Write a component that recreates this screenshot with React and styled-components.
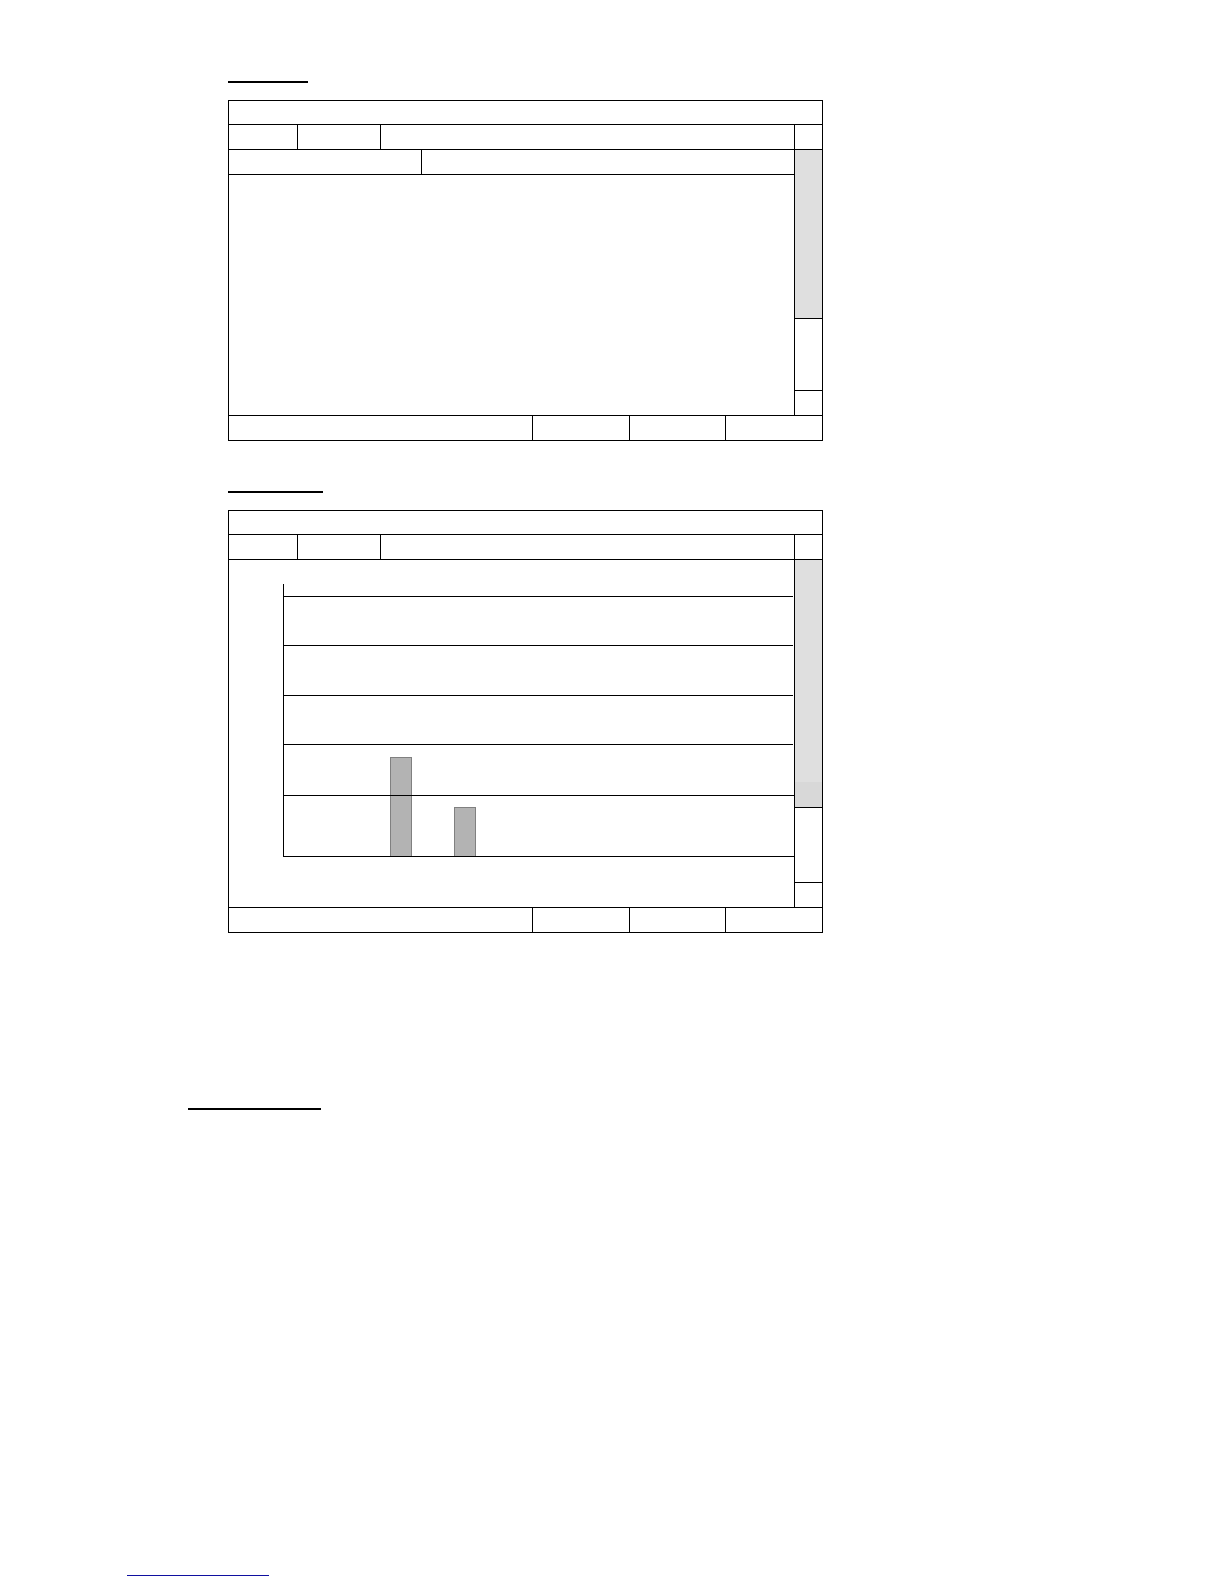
import React from "react";
import styled, { createGlobalStyle } from "styled-components";

const tabs = [69, 83];
const actions = [97, 96, 97];

const gridBands = [49, 50, 49, 51, 61];
const bars = [
  { id: "first", offset: 106, height: 99 },
  { id: "second", offset: 42, height: 49 },
];

const Tabs = () => (
  <TabRow>
    {tabs.map((width) => (
      <Tab key={width} type="button" aria-label="Tab" $width={width} />
    ))}
  </TabRow>
);

const ScrollRail = ({ thumb, shaded }) => (
  <Rail>
    <RailButton type="button" aria-label="Scroll up" />
    <Thumb $height={thumb}>{shaded && <ThumbShade />}</Thumb>
    <Track />
    <RailButton type="button" aria-label="Scroll down" $last />
  </Rail>
);

const Screen = ({ thumb, shaded, children }) => (
  <Frame>
    <TitleBar />
    <Middle>
      <Main>
        <Tabs />
        {children}
      </Main>
      <ScrollRail thumb={thumb} shaded={shaded} />
    </Middle>
    <ActionBar>
      <Status />
      {actions.map((width, i) => (
        <Action key={i} type="button" aria-label="Action" $width={width} />
      ))}
    </ActionBar>
  </Frame>
);

const BarChart = () => (
  <Chart>
    <Plot>
      <Bars>
        {bars.map((bar) => (
          <Bar key={bar.id} $offset={bar.offset} $height={bar.height} />
        ))}
      </Bars>
      <GridLines>
        {gridBands.map((height, i) => (
          <Band key={i} $height={height} />
        ))}
      </GridLines>
    </Plot>
  </Chart>
);

const App = () => {
  return (
    <>
      <GlobalStyle />
      <Page>
        <Content>
          <Heading $width={80} />
          <Screen thumb={168}>
            <FieldRow>
              <FieldLabel />
            </FieldRow>
            <ListArea />
          </Screen>

          <SecondHeading $width={95} />
          <Screen thumb={247} shaded>
            <BarChart />
          </Screen>
        </Content>

        <SectionHeading $width={133} />

        <Footer>
          <FooterLink href="#top" aria-label="Back to top" />
        </Footer>
      </Page>
    </>
  );
};

export default App;

/* ---------- Page ---------- */

const GlobalStyle = createGlobalStyle`
  * {
    box-sizing: border-box;
  }

  body {
    margin: 0;
    background: #fff;
    color: #000;
    font-family: "Liberation Sans", Arial, sans-serif;
    font-size: 16px;
  }

  button {
    margin: 0;
    padding: 0;
    border: 0;
    border-radius: 0;
    background: transparent;
    cursor: pointer;
  }
`;

const Page = styled.main`
  display: flex;
  flex-direction: column;
  min-height: 100vh;
  padding: 40px 0 8px 127px;
`;

const Content = styled.div`
  padding: 0 401px 0 101px;
`;

const Heading = styled.h2`
  width: ${({ $width }) => $width}px;
  height: 43px;
  margin: 0 0 17px;
  border-bottom: 2px solid #000;
`;

const SecondHeading = styled(Heading)`
  margin-top: 9px;
`;

const SectionHeading = styled(Heading)`
  margin: 134px 0 0 61px;
`;

const Footer = styled.footer`
  margin-top: auto;
`;

const FooterLink = styled.a`
  display: block;
  width: 142px;
  height: 20px;
  border-bottom: 1px solid #1010a0;
`;

/* ---------- Screen frame ---------- */

const Frame = styled.section`
  border: 1px solid #000;
`;

const TitleBar = styled.header`
  height: 23px;
`;

const Middle = styled.div`
  display: flex;
  border-top: 1px solid #000;
`;

const Main = styled.div`
  flex: 1;
  min-width: 0;
`;

const TabRow = styled.div`
  display: flex;
  height: 25px;
  border-bottom: 1px solid #000;
`;

const Tab = styled.button`
  && {
    width: ${({ $width }) => $width}px;
    border-right: 1px solid #000;
  }
`;

const FieldRow = styled.div`
  display: flex;
  height: 25px;
  border-bottom: 1px solid #000;
`;

const FieldLabel = styled.div`
  width: 193px;
  border-right: 1px solid #000;
`;

const ListArea = styled.div`
  height: 240px;
`;

const ActionBar = styled.footer`
  display: flex;
  height: 25px;
  border-top: 1px solid #000;
`;

const Status = styled.div`
  flex: 1;
`;

const Action = styled.button`
  && {
    width: ${({ $width }) => $width}px;
    border-left: 1px solid #000;
  }
`;

/* ---------- Scroll rail ---------- */

const Rail = styled.div`
  display: flex;
  flex-direction: column;
  width: 28px;
  border-left: 1px solid #000;
`;

const RailButton = styled.button`
  && {
    height: 25px;
    border-top: ${({ $last }) => ($last ? "1px solid #000" : "0")};
    border-bottom: ${({ $last }) => ($last ? "0" : "1px solid #000")};
  }
`;

const Thumb = styled.div`
  display: flex;
  flex-direction: column;
  justify-content: flex-end;
  height: ${({ $height }) => $height + 1}px;
  border-bottom: 1px solid #000;
  background: #dfdfdf;
`;

const ThumbShade = styled.div`
  height: 25px;
  background: #d8d8d8;
`;

const Track = styled.div`
  flex: 1;
`;

/* ---------- Chart ---------- */

const Chart = styled.div`
  padding: 24px 0 50px 54px;
`;

const Plot = styled.div`
  display: grid;
  border-left: 1px solid #000;
  border-bottom: 1px solid #000;
`;

// bars and grid lines share one cell, with the lines drawn over the bars
const Bars = styled.div`
  grid-area: 1 / 1;
  display: flex;
  align-items: flex-end;
`;

const Bar = styled.div`
  width: 22px;
  height: ${({ $height }) => $height}px;
  margin-left: ${({ $offset }) => $offset}px;
  border: 1px solid #808080;
  border-bottom: 0;
  background: #b3b3b3;
`;

const GridLines = styled.div`
  grid-area: 1 / 1;
  padding-top: 12px;
`;

const Band = styled.div`
  height: ${({ $height }) => $height}px;
  margin-right: 1px;
  border-top: 1px solid #000;

  &:last-child {
    margin-right: 0;
  }
`;
